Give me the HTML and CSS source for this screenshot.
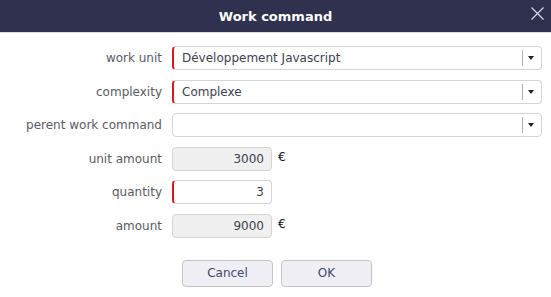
FILE: index.html
```html
<!DOCTYPE html>
<html lang="en">
<head>
    <meta charset="UTF-8">
    <title>Work command</title>
    <link rel="stylesheet" href="styles.css">
</head>
<body>
    <div class="dialog">
        <div class="dialog-header">
            <span class="dialog-title">Work command</span>
            <span class="dialog-close">
                <svg width="13" height="13" viewBox="0 0 13 13">
                    <path d="M0.5 0.5 L12.5 12.5 M12.5 0.5 L0.5 12.5" stroke="#d8d8e4" stroke-width="1.2" fill="none"/>
                </svg>
            </span>
        </div>

        <div class="form">
            <label class="form-label">work unit</label>
            <div class="field">
                <div class="select required">
                    <span class="select-value">Développement Javascript</span>
                    <span class="select-arrow"></span>
                </div>
            </div>

            <label class="form-label">complexity</label>
            <div class="field">
                <div class="select required">
                    <span class="select-value">Complexe</span>
                    <span class="select-arrow"></span>
                </div>
            </div>

            <label class="form-label">perent work command</label>
            <div class="field">
                <div class="select">
                    <span class="select-value"></span>
                    <span class="select-arrow"></span>
                </div>
            </div>

            <label class="form-label">unit amount</label>
            <div class="field">
                <div class="number readonly">3000</div>
                <span class="currency">€</span>
            </div>

            <label class="form-label">quantity</label>
            <div class="field">
                <div class="number required">3</div>
            </div>

            <label class="form-label">amount</label>
            <div class="field">
                <div class="number readonly">9000</div>
                <span class="currency">€</span>
            </div>
        </div>

        <div class="buttons">
            <button class="btn">Cancel</button>
            <button class="btn">OK</button>
        </div>
    </div>
</body>
</html>
```

FILE: styles.css
```css
body {
    margin: 0;
    background: #ffffff;
    font-family: "DejaVu Sans", Verdana, sans-serif;
    font-size: 12px;
}

.dialog {
    width: 551px;
    height: 297px;
}

/* 标题栏 */
.dialog-header {
    position: relative;
    height: 32px;
    background: #30304f;
    border-bottom: 1px solid #dcdcdc;
    display: flex;
    align-items: center;
    justify-content: center;
}

.dialog-title {
    color: #ffffff;
    font-weight: bold;
    font-size: 13px;
}

.dialog-close {
    position: absolute;
    right: 7px;
    top: 7px;
    width: 13px;
    height: 13px;
    line-height: 0;
}

/* 表单 */
.form {
    display: grid;
    grid-template-columns: 162px 370px;
    column-gap: 10px;
    row-gap: 9.6px;
    padding-top: 13px;
}

.form-label {
    color: #5a5a66;
    text-align: right;
    line-height: 24px;
    height: 24px;
}

.field {
    display: flex;
    align-items: center;
    height: 24px;
}

.select {
    box-sizing: border-box;
    width: 370px;
    height: 24px;
    border: 1px solid #d4d4d4;
    border-radius: 4px;
    display: flex;
    align-items: center;
    background: #fff;
}

.select-value {
    flex: 1;
    padding-left: 9px;
    color: #3d4150;
}

.select-arrow {
    position: relative;
    width: 18px;
    height: 16px;
    border-left: 1px solid #b0b0b0;
}

.select-arrow::after {
    content: "";
    position: absolute;
    left: 5px;
    top: 6px;
    border-left: 3px solid transparent;
    border-right: 3px solid transparent;
    border-top: 4px solid #222;
}

.number {
    box-sizing: border-box;
    width: 100px;
    height: 24px;
    border: 1px solid #d4d4d4;
    border-radius: 4px;
    text-align: right;
    padding-right: 7px;
    line-height: 22px;
    color: #3d4150;
    background: #fff;
}

.number.readonly {
    background: #f0f0f0;
}

/* 必填字段红色左边框 */
.required {
    border-left: 2px solid #e0161f;
}

.select.required .select-value {
    padding-left: 8px;
}

.currency {
    margin-left: 6px;
    color: #111;
    margin-top: -4px;
}

/* 按钮 */
.buttons {
    display: flex;
    justify-content: center;
    gap: 8px;
    padding-top: 22px;
    padding-left: 3px;
}

.btn {
    width: 91px;
    height: 27px;
    background: #efeff5;
    border: 1px solid #c4c4c8;
    border-radius: 4px;
    font-family: "DejaVu Sans", Verdana, sans-serif;
    font-size: 12px;
    color: #3f4770;
    padding: 0;
}
```
